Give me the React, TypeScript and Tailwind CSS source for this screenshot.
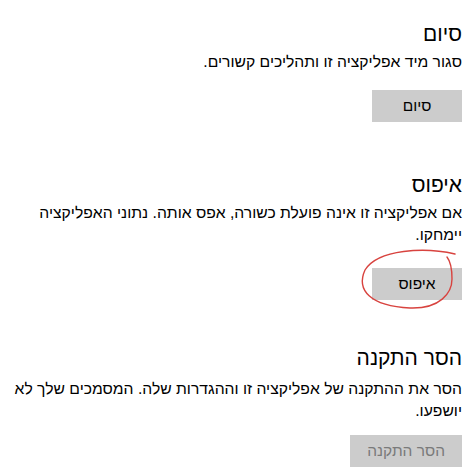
import React from "react";

const font = { fontFamily: '"Segoe UI", "Liberation Sans", sans-serif' };

function Section({
  title,
  desc,
  button,
  disabled,
  className,
  descClass,
  btnClass,
}: {
  title: string;
  desc: string;
  button: string;
  disabled?: boolean;
  className?: string;
  descClass?: string;
  btnClass?: string;
}) {
  return (
    <section className={"flex flex-col items-start " + (className ?? "")}>
      <h2 className="text-[21px] leading-[28px] font-normal text-black">{title}</h2>
      <p className={"text-[15.7px] leading-[22px] text-black " + (descClass ?? "mt-[3px]")}>{desc}</p>
      <button
        className={
          "h-[32px] min-w-[90px] px-[17px] text-[15.5px] bg-[#cccccc] " +
          (disabled ? "text-[#7a7a7a] " : "text-black ") +
          (btnClass ?? "mt-[17px]")
        }
      >
        {button}
      </button>
    </section>
  );
}

export default function App() {
  return (
    <div dir="rtl" style={font} className="relative w-[475px] h-[472px] bg-white overflow-hidden">
      <div className="flex flex-col pl-[13px] pr-[13px] pt-[20px]">
        <Section
          title="סיום"
          desc="סגור מיד אפליקציה זו ותהליכים קשורים."
          button="סיום"
        />
        <Section
          className="mt-[49px]"
          title="איפוס"
          desc="אם אפליקציה זו אינה פועלת כשורה, אפס אותה. נתוני האפליקציה יימחקו."
          button="איפוס"
          btnClass="mt-[22px]"
        />
        <Section
          className="mt-[44px]"
          title="הסר התקנה"
          desc="הסר את ההתקנה של אפליקציה זו וההגדרות שלה. המסמכים שלך לא יושפעו."
          button="הסר התקנה"
          descClass="mt-[6px]"
          btnClass="mt-[13px]"
          disabled
        />
      </div>
      <svg
        className="absolute inset-0 pointer-events-none"
        width="475"
        height="472"
        viewBox="0 0 475 472"
      >
        <path
          d="M455 254 C425 247, 378 249, 365 270 C356 290, 370 306, 410 308 C440 309, 452 293, 452 279 C452 268, 451 262, 447 257"
          fill="none"
          stroke="#d8433f"
          strokeWidth="1.4"
          strokeLinecap="round"
        />
      </svg>
    </div>
  );
}
